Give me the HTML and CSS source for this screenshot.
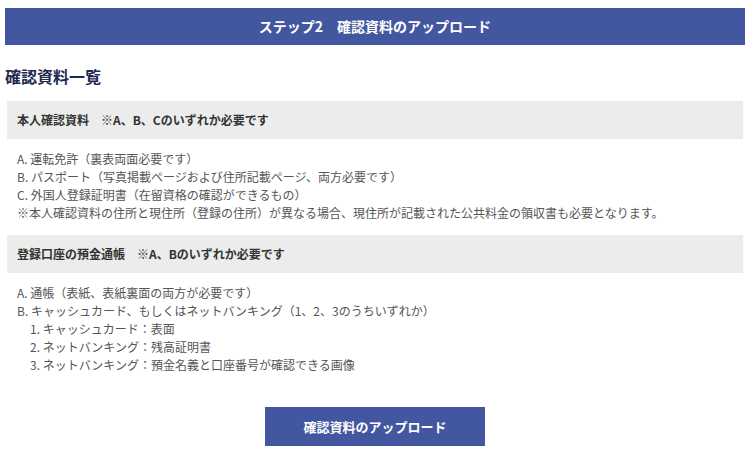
FILE: index.html
```html
<!DOCTYPE html>
<html lang="ja">
<head>
<meta charset="utf-8">
<title>ステップ2 確認資料のアップロード</title>
<link rel="stylesheet" href="styles.css">
</head>
<body>
<div class="page">
  <header class="step-bar">ステップ2　確認資料のアップロード</header>
  <h2 class="title">確認資料一覧</h2>

  <section class="group">
    <h3 class="group-head">本人確認資料　※A、B、Cのいずれか必要です</h3>
    <ul class="items">
      <li>A. 運転免許（裏表両面必要です）</li>
      <li>B. パスポート（写真掲載ページおよび住所記載ページ、両方必要です）</li>
      <li>C. 外国人登録証明書（在留資格の確認ができるもの）</li>
      <li>※本人確認資料の住所と現住所（登録の住所）が異なる場合、現住所が記載された公共料金の領収書も必要となります。</li>
    </ul>
  </section>

  <section class="group">
    <h3 class="group-head">登録口座の預金通帳　※A、Bのいずれか必要です</h3>
    <ul class="items">
      <li>A. 通帳（表紙、表紙裏面の両方が必要です）</li>
      <li>B. キャッシュカード、もしくはネットバンキング（1、2、3のうちいずれか）</li>
      <li class="sub">1. キャッシュカード：表面</li>
      <li class="sub">2. ネットバンキング：残高証明書</li>
      <li class="sub">3. ネットバンキング：預金名義と口座番号が確認できる画像</li>
    </ul>
  </section>

  <div class="actions">
    <button class="upload-btn" type="button">確認資料のアップロード</button>
  </div>
</div>
</body>
</html>
```

FILE: styles.css
```css
* { box-sizing: border-box; }
html, body { margin: 0; padding: 0; background: #fff; }
body {
  font-family: "Noto Sans CJK JP", "Noto Sans", sans-serif;
  color: #555;
}
.page {
  width: 740px;
  margin: 0 0 0 5px;
  padding-top: 8px;
}
.step-bar {
  height: 37px;
  line-height: 37px;
  background: #4257a0;
  color: #fff;
  font-size: 14px;
  font-weight: bold;
  text-align: center;
}
.title {
  margin: 21px 0 0;
  height: 35px;
  line-height: 20px;
  font-size: 16px;
  font-weight: bold;
  color: #1e2850;
}
.group { margin: 0 2px; }
.group-head {
  margin: 0;
  height: 38px;
  line-height: 38px;
  padding-left: 10px;
  background: #ececec;
  font-size: 12px;
  font-weight: bold;
  color: #333;
}
.items {
  list-style: none;
  margin: 11px 0 13px;
  padding: 0 0 0 10px;
  font-size: 12px;
  line-height: 18px;
  color: #555;
}
.items .sub { padding-left: 13px; }
.actions {
  display: flex;
  justify-content: center;
  padding-top: 20px;
}
.upload-btn {
  width: 220px;
  height: 39px;
  border: 0;
  background: #4257a0;
  color: #fff;
  font-family: "Noto Sans CJK JP", "Noto Sans", sans-serif;
  font-size: 13px;
  font-weight: bold;
  cursor: pointer;
}
```
